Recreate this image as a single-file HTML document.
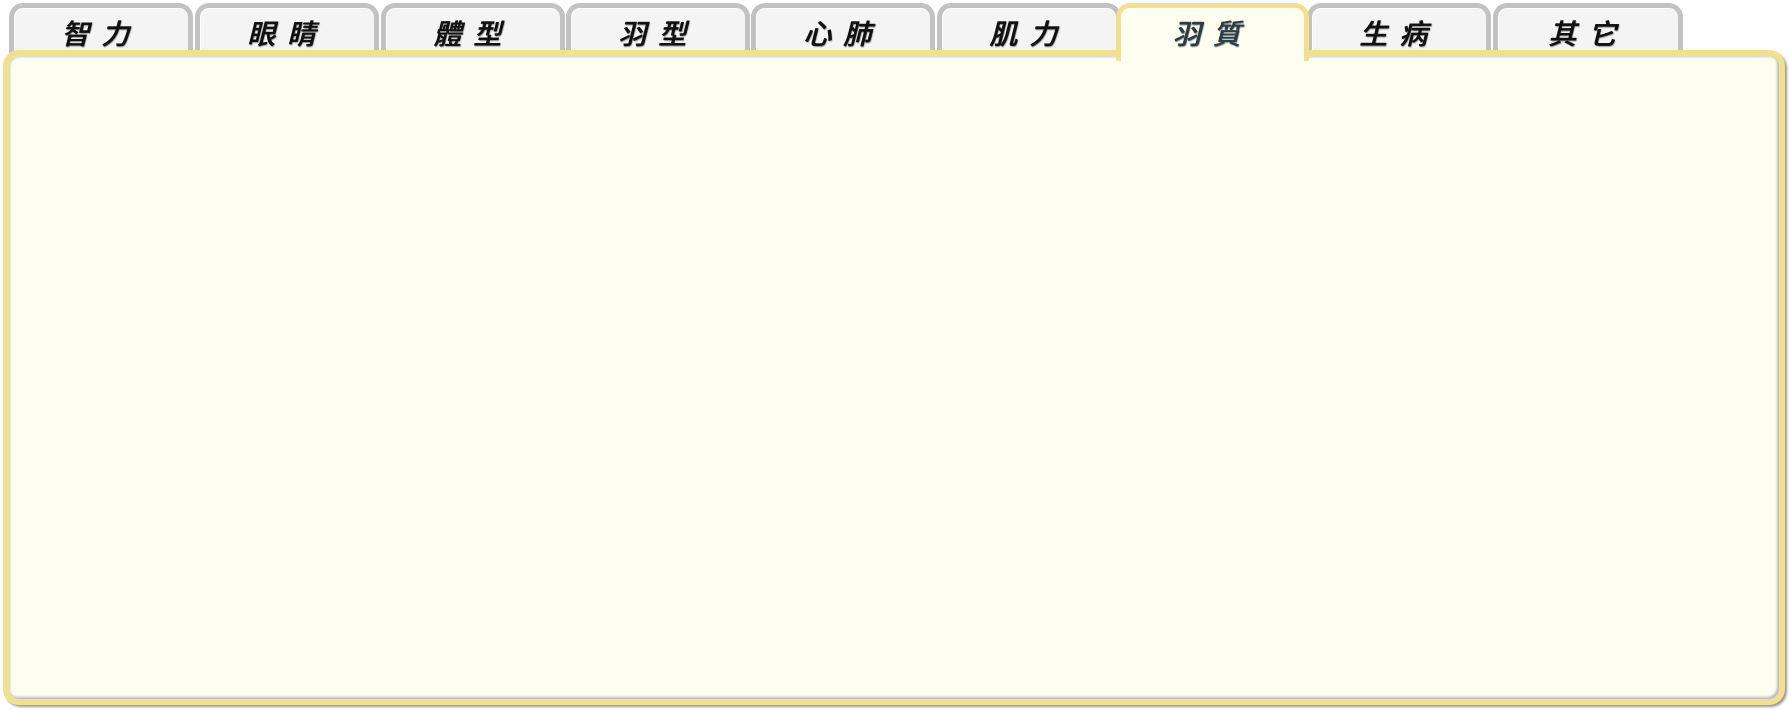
<!DOCTYPE html>
<html><head><meta charset="utf-8"><style>
html,body{margin:0;padding:0;background:#fff;width:1789px;height:709px;overflow:hidden}
.tab{position:absolute;top:3px;height:60px;width:184px;box-sizing:border-box;border:5px solid #c2c2c2;border-bottom:none;border-radius:14px 14px 0 0;background:#f4f4f4;font-family:"Liberation Sans","Noto Sans CJK TC",sans-serif;font-style:italic;font-size:28px;font-weight:500;color:#111;text-align:center;line-height:54px;letter-spacing:12px;box-shadow:inset 1px 1px 0 #fff;text-shadow:0.6px 0 0 #111,1px 1px 1px #888}
.tab.act{background:#fdfdf0;border-color:#f2e08c;z-index:3;height:58px;color:#2a3c44;text-shadow:0.6px 0 0 #2a3c44,1px 1px 1px #888}
.panel{position:absolute;left:3px;top:50px;width:1782px;height:655px;box-sizing:border-box;border:6px solid #f2e08c;border-radius:16px;background:#fdfdf0;box-shadow:2px 2px 2px #999;z-index:2}
.panel:after{content:"";position:absolute;inset:0;border-radius:10px;box-shadow:inset 1px 1px 2px #ccc,inset -2px -2px 2px #bbb}
</style></head><body>
<div class="tab" style="left:9px">智力</div>
<div class="tab" style="left:195px">眼睛</div>
<div class="tab" style="left:381px">體型</div>
<div class="tab" style="left:566px">羽型</div>
<div class="tab" style="left:751px">心肺</div>
<div class="tab" style="left:937px">肌力</div>
<div class="tab act" style="left:1116px;width:193px">羽質</div>
<div class="tab" style="left:1307px">生病</div>
<div class="tab" style="left:1493px;width:190px">其它</div>
<div class="panel"></div>
<div style="position:absolute;left:1122px;top:50px;width:181px;height:8px;background:#fdfdf0;z-index:4"></div>
</body></html>
